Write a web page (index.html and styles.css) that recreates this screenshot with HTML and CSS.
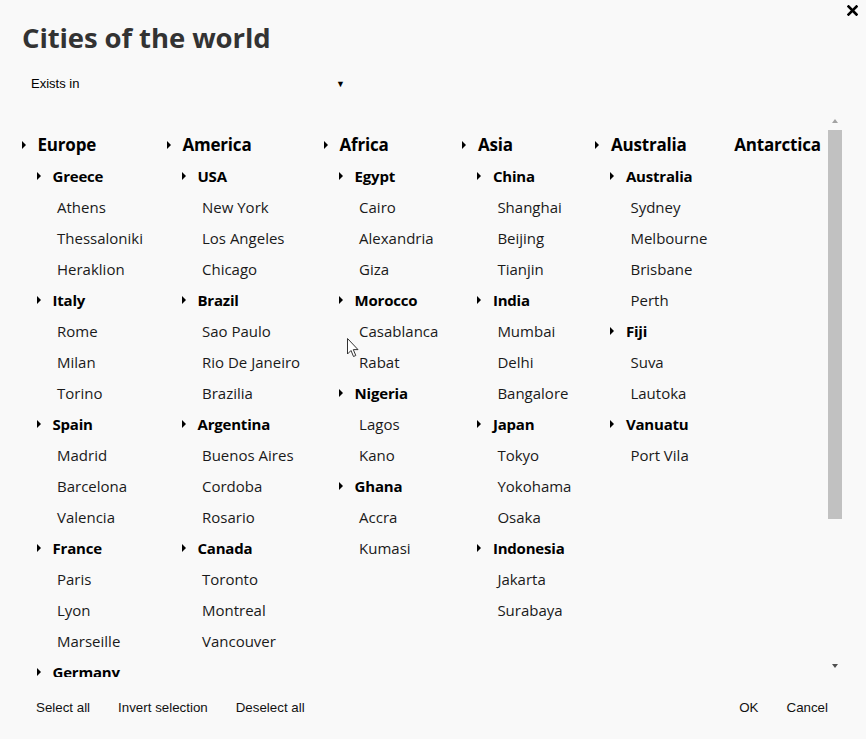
FILE: index.html
```html
<!DOCTYPE html>
<html>
<head>
<meta charset="utf-8">
<link rel="stylesheet" href="styles.css">
</head>
<body>
<div class="dialog">
  <button class="close" aria-label="Close">
    <svg width="11" height="11" viewBox="0 0 11 11"><path d="M1.5 1.5 L9.5 9.5 M9.5 1.5 L1.5 9.5" stroke="#000" stroke-width="2.6" stroke-linecap="square"/></svg>
  </button>
  <h1 class="title">Cities of the world</h1>
  <div class="select">
    <span>Exists in</span>
    <span class="select-arrow">&#9660;</span>
  </div>

  <div class="viewport">
    <div class="tree">
      <div class="col">
        <div class="row l1"><span class="caret"></span>Europe</div>
        <div class="row l2"><span class="caret"></span>Greece</div>
        <div class="row l3">Athens</div>
        <div class="row l3">Thessaloniki</div>
        <div class="row l3">Heraklion</div>
        <div class="row l2"><span class="caret"></span>Italy</div>
        <div class="row l3">Rome</div>
        <div class="row l3">Milan</div>
        <div class="row l3">Torino</div>
        <div class="row l2"><span class="caret"></span>Spain</div>
        <div class="row l3">Madrid</div>
        <div class="row l3">Barcelona</div>
        <div class="row l3">Valencia</div>
        <div class="row l2"><span class="caret"></span>France</div>
        <div class="row l3">Paris</div>
        <div class="row l3">Lyon</div>
        <div class="row l3">Marseille</div>
        <div class="row l2"><span class="caret"></span>Germany</div>
        <div class="row l3">Berlin</div>
        <div class="row l3">Munich</div>
      </div>
      <div class="col">
        <div class="row l1"><span class="caret"></span>America</div>
        <div class="row l2"><span class="caret"></span>USA</div>
        <div class="row l3">New York</div>
        <div class="row l3">Los Angeles</div>
        <div class="row l3">Chicago</div>
        <div class="row l2"><span class="caret"></span>Brazil</div>
        <div class="row l3">Sao Paulo</div>
        <div class="row l3">Rio De Janeiro</div>
        <div class="row l3">Brazilia</div>
        <div class="row l2"><span class="caret"></span>Argentina</div>
        <div class="row l3">Buenos Aires</div>
        <div class="row l3">Cordoba</div>
        <div class="row l3">Rosario</div>
        <div class="row l2"><span class="caret"></span>Canada</div>
        <div class="row l3">Toronto</div>
        <div class="row l3">Montreal</div>
        <div class="row l3">Vancouver</div>
      </div>
      <div class="col">
        <div class="row l1"><span class="caret"></span>Africa</div>
        <div class="row l2"><span class="caret"></span>Egypt</div>
        <div class="row l3">Cairo</div>
        <div class="row l3">Alexandria</div>
        <div class="row l3">Giza</div>
        <div class="row l2"><span class="caret"></span>Morocco</div>
        <div class="row l3">Casablanca</div>
        <div class="row l3">Rabat</div>
        <div class="row l2"><span class="caret"></span>Nigeria</div>
        <div class="row l3">Lagos</div>
        <div class="row l3">Kano</div>
        <div class="row l2"><span class="caret"></span>Ghana</div>
        <div class="row l3">Accra</div>
        <div class="row l3">Kumasi</div>
      </div>
      <div class="col">
        <div class="row l1"><span class="caret"></span>Asia</div>
        <div class="row l2"><span class="caret"></span>China</div>
        <div class="row l3">Shanghai</div>
        <div class="row l3">Beijing</div>
        <div class="row l3">Tianjin</div>
        <div class="row l2"><span class="caret"></span>India</div>
        <div class="row l3">Mumbai</div>
        <div class="row l3">Delhi</div>
        <div class="row l3">Bangalore</div>
        <div class="row l2"><span class="caret"></span>Japan</div>
        <div class="row l3">Tokyo</div>
        <div class="row l3">Yokohama</div>
        <div class="row l3">Osaka</div>
        <div class="row l2"><span class="caret"></span>Indonesia</div>
        <div class="row l3">Jakarta</div>
        <div class="row l3">Surabaya</div>
      </div>
      <div class="col">
        <div class="row l1"><span class="caret"></span>Australia</div>
        <div class="row l2"><span class="caret"></span>Australia</div>
        <div class="row l3">Sydney</div>
        <div class="row l3">Melbourne</div>
        <div class="row l3">Brisbane</div>
        <div class="row l3">Perth</div>
        <div class="row l2"><span class="caret"></span>Fiji</div>
        <div class="row l3">Suva</div>
        <div class="row l3">Lautoka</div>
        <div class="row l2"><span class="caret"></span>Vanuatu</div>
        <div class="row l3">Port Vila</div>
      </div>
      <div class="col">
        <div class="row l1">Antarctica</div>
      </div>
    </div>
    <div class="scrollbar">
      <span class="sb-up"></span>
      <div class="sb-track"><div class="sb-thumb"></div></div>
      <span class="sb-down"></span>
    </div>
  </div>

  <div class="actions">
    <div class="group">
      <button class="btn">Select all</button>
      <button class="btn">Invert selection</button>
      <button class="btn">Deselect all</button>
    </div>
    <div class="group">
      <button class="btn">OK</button>
      <button class="btn">Cancel</button>
    </div>
  </div>

  <svg class="cursor" width="12" height="20" viewBox="0 0 12 20"><path d="M0.5 0.5 L0.5 16 L4 12.5 L6.5 18.5 L8.8 17.5 L6.3 11.6 L11 11.6 Z" fill="#fff" stroke="#333" stroke-width="1"/></svg>
</div>
</body>
</html>
```

FILE: styles.css
```css
html, body {
  margin: 0;
  padding: 0;
  background: #f9f9f9;
}
body {
  width: 866px;
  height: 739px;
  overflow: hidden;
}
.dialog {
  position: relative;
  height: 739px;
  padding: 0 24px 0 22px;
  box-sizing: border-box;
  display: flex;
  flex-direction: column;
}
.close {
  position: absolute;
  top: 5px;
  right: 8px;
  padding: 0;
  border: 0;
  background: none;
  line-height: 0;
}
.title {
  margin: 20px 0 0 0;
  font-family: "Open Sans", sans-serif;
  font-weight: 700;
  font-size: 27.5px;
  line-height: 36px;
  color: #333;
  letter-spacing: -0.1px;
}
.select {
  width: 314px;
  margin-top: 19px;
  padding-left: 9px;
  display: flex;
  justify-content: space-between;
  align-items: center;
  font-family: "Liberation Sans", Arial, sans-serif;
  font-size: 13px;
  line-height: 18px;
  color: #000;
}
.select-arrow {
  font-size: 9px;
}
.viewport {
  margin-top: 23px;
  height: 561px;
  display: flex;
}
.tree {
  flex: 1;
  overflow: hidden;
  padding-top: 13px;
  display: flex;
  align-items: flex-start;
}
.col {
  padding-right: 24px;
  display: flex;
  flex-direction: column;
}
.col:nth-child(5) {
  padding-right: 27px;
}
.row {
  height: 31px;
  display: flex;
  align-items: center;
  font-family: "Open Sans", sans-serif;
  white-space: nowrap;
  color: #111;
}
.l1 {
  font-size: 17px;
  font-weight: 700;
  color: #000;
  letter-spacing: -0.2px;
}
.l2 {
  padding-left: 15px;
  font-size: 15px;
  font-weight: 700;
  color: #000;
  letter-spacing: -0.2px;
}
.l3 {
  padding-left: 35px;
  font-size: 15px;
  color: #1a1a1a;
}
.caret {
  width: 0;
  height: 0;
  border-top: 4px solid transparent;
  border-bottom: 4px solid transparent;
  border-left: 4.5px solid #000;
  margin-right: 11.5px;
  flex: none;
}
.scrollbar {
  width: 14px;
  display: flex;
  flex-direction: column;
  align-items: center;
}
.sb-up, .sb-down {
  width: 0;
  height: 0;
  border-left: 3.5px solid transparent;
  border-right: 3.5px solid transparent;
}
.sb-up {
  margin-top: 3px;
  border-bottom: 4px solid #a3a3a3;
}
.sb-down {
  margin-bottom: 9px;
  border-top: 4px solid #505050;
}
.sb-track {
  flex: 1;
  width: 14px;
  padding-top: 7px;
  margin-bottom: 6px;
}
.sb-thumb {
  height: 389px;
  background: #c1c1c1;
}
.actions {
  margin-top: 21px;
  display: flex;
  justify-content: space-between;
}
.group {
  display: flex;
}
.btn {
  border: 0;
  background: none;
  padding: 0 14px;
  font-family: "Liberation Sans", Arial, sans-serif;
  font-size: 13.333px;
  line-height: 20px;
  color: #111;
}
.cursor {
  position: absolute;
  left: 347px;
  top: 338px;
}
```
